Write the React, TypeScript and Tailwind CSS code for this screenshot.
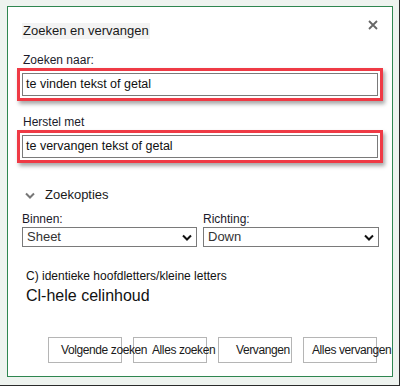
import React from 'react';

const font = { fontFamily: '"Liberation Sans", Arial, sans-serif' };

function Chevron({ className = '' }: { className?: string }) {
  return (
    <svg width="10" height="7" viewBox="0 0 10 7" className={className}>
      <path d="M1 1.5 L5 5.5 L9 1.5" fill="none" stroke="currentColor" strokeWidth="2" />
    </svg>
  );
}

function RedField({ value }: { value: string }) {
  return (
    <div className="ml-[9px] w-[366px] border-[3px] border-[#ef3a45] bg-white p-[2px] shadow-[2px_3px_4px_rgba(0,0,0,0.35)]">
      <div className="h-[23px] border border-[#7a7a7a] pl-[3px] text-[12.5px] leading-[21px] text-[#111]">
        {value}
      </div>
    </div>
  );
}

function Select({ value }: { value: string }) {
  return (
    <div className="flex h-[20px] items-center justify-between border border-[#7a7a7a] bg-white pl-[4px] pr-[4px] text-[13px] text-[#333]">
      <span>{value}</span>
      <Chevron className="text-[#111]" />
    </div>
  );
}

const buttons = [
  { label: 'Volgende zoeken', pad: 'pl-[12px]' },
  { label: 'Alles zoeken', pad: 'pl-[18px]' },
  { label: 'Vervangen', pad: 'pl-[17px]' },
  { label: 'Alles vervangen', pad: 'pl-[8px]' },
];

export default function App() {
  return (
    <div
      className="flex h-[386px] w-[400px] border-r border-b border-[#2a2a2a] bg-[#eef3ef] pt-[6px] pr-[6px] pb-[8px] pl-[7px]"
      style={font}
    >
      <div className="flex flex-1 flex-col border border-[#2f8650] bg-white">
        {/* title */}
        <div className="flex items-start justify-between pt-[16px] pr-[14px] pl-[14px]">
          <span className="bg-[#f3f3f3] px-[1px] text-[13px] leading-[16px] text-[#1a1a1a]">
            Zoeken en vervangen
          </span>
          <svg width="10" height="10" viewBox="0 0 10 10" className="-mt-[3px]">
            <path d="M1 1 L9 9 M9 1 L1 9" stroke="#666" strokeWidth="1.8" />
          </svg>
        </div>

        <div className="mt-[14px] ml-[15px] text-[12px] leading-[15px] text-[#1a1a2a]">Zoeken naar:</div>
        <RedField value="te vinden tekst of getal" />

        <div className="mt-[14px] ml-[15px] text-[12px] leading-[15px] text-[#1a1a2a]">Herstel met</div>
        <RedField value="te vervangen tekst of getal" />

        {/* options toggle */}
        <div className="mt-[24px] flex items-center pl-[17px]">
          <Chevron className="text-[#777]" />
          <span className="ml-[10px] text-[13px] leading-[16px] text-[#1a1a1a]">Zoekopties</span>
        </div>

        <div className="mt-[9px] flex gap-[6px] pl-[14px] pr-[13px]">
          <div className="flex w-[175px] flex-col">
            <span className="text-[12px] leading-[15px] text-[#1a1a2a]">Binnen:</span>
            <Select value="Sheet" />
          </div>
          <div className="flex flex-1 flex-col">
            <span className="text-[12px] leading-[15px] text-[#1a1a2a]">Richting:</span>
            <Select value="Down" />
          </div>
        </div>

        <div className="mt-[22px] pl-[18px] text-[12px] leading-[15px] text-[#111]">
          C) identieke hoofdletters/kleine letters
        </div>
        <div className="mt-[2px] pl-[18px] text-[16px] leading-[20px] text-[#111]">Cl-hele celinhoud</div>

        {/* buttons */}
        <div className="mt-[31px] flex gap-[11px] pl-[40px]">
          {buttons.map((b) => (
            <div
              key={b.label}
              className={`flex h-[26px] w-[74px] items-center justify-start overflow-visible whitespace-nowrap border border-[#b5b5b5] bg-white text-[12px] tracking-[-0.4px] text-[#1a1a1a] ${b.pad}`}
            >
              <span className="relative z-10">{b.label}</span>
            </div>
          ))}
        </div>
      </div>
    </div>
  );
}
